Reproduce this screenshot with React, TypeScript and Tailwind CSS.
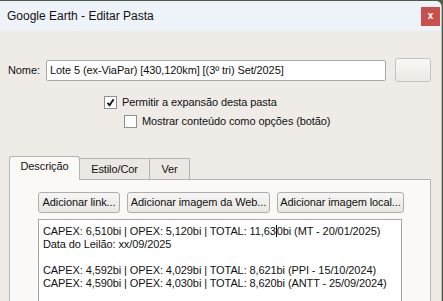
import React from 'react';

const font = { fontFamily: '"Liberation Sans", Arial, sans-serif' };

function Check({ checked }: { checked?: boolean }) {
  return (
    <span className="w-[13px] h-[13px] border border-[#8f8f8f] bg-white flex items-center justify-center shrink-0">
      {checked && (
        <svg width="9" height="9" viewBox="0 0 9 9">
          <path d="M1.5 4.8 L3.6 7.2 L7.6 1.2" fill="none" stroke="#111" strokeWidth="1.8" />
        </svg>
      )}
    </span>
  );
}

function Btn({ children, w }: { children: React.ReactNode; w: string }) {
  return (
    <div className={`${w} h-[21px] rounded-[3px] border border-[#adadad] bg-gradient-to-b from-[#f7f6f4] to-[#e9e7e3] flex items-center justify-center text-[11px] leading-none tracking-[-0.1px] text-[#111] whitespace-nowrap`}>
      {children}
    </div>
  );
}

export default function App() {
  return (
    <div className="w-[443px] h-[301px] bg-[#4d5a45] overflow-hidden pt-px" style={font}>
      <div className="w-[442px] h-[300px] rounded-tr-[6px] overflow-hidden border-r border-[#b9b9b9] bg-[#efece8] flex flex-col text-[11px] tracking-[-0.1px] text-[#111]">
        {/* Title bar */}
        <div className="h-[30px] bg-[#eef3f9] flex items-center justify-between pl-[7px] pr-[1px] shrink-0">
          <span className="text-[12px] tracking-normal leading-none">Google Earth - Editar Pasta</span>
          <div className="w-[19px] h-[19px] bg-[#c9504f] flex items-center justify-center text-white text-[10px] font-bold leading-none">x</div>
        </div>

        {/* Name row */}
        <div className="flex items-center h-[24px] mt-[27px] pl-[8px] shrink-0">
          <span className="w-[38px]">Nome:</span>
          <div className="w-[340px] h-[21px] bg-white border border-[#a9a9a9] rounded-[2px] flex items-center px-[3px] whitespace-nowrap">
            Lote 5 (ex-ViaPar) [430,120km] [(3º tri) Set/2025]
          </div>
          <div className="ml-[9px] w-[36px] h-[24px] rounded-[3px] border border-[#c3c3c3] bg-gradient-to-b from-[#faf8f5] to-[#ece9e4]" />
        </div>

        {/* Checkboxes */}
        <div className="flex items-center gap-[5px] h-[16px] mt-[12px] pl-[104px] shrink-0">
          <Check checked />
          <span>Permitir a expansão desta pasta</span>
        </div>
        <div className="flex items-center gap-[5px] h-[16px] mt-[3px] pl-[124px] shrink-0">
          <Check />
          <span>Mostrar conteúdo como opções (botão)</span>
        </div>

        {/* Tabs */}
        <div className="flex items-end mt-[27px] pl-[9px] h-[23px] relative z-10 shrink-0">
          <div className="h-[24px] w-[71px] border border-[#b3b3b3] border-b-0 rounded-t-[3px] bg-[#fbf9f6] flex items-center justify-center -mb-px pb-[4px]">
            Descrição
          </div>
          <div className="h-[21px] w-[70px] border border-l-0 border-b-0 border-[#b3b3b3] bg-[#ebe8e4] flex items-center justify-center">
            Estilo/Cor
          </div>
          <div className="h-[21px] w-[40px] border border-l-0 border-b-0 border-[#b3b3b3] bg-[#ebe8e4] rounded-tr-[2px] flex items-center justify-center">
            Ver
          </div>
        </div>

        {/* Panel */}
        <div className="ml-[9px] w-[422px] flex-1 border border-[#b3b3b3] border-b-0 bg-[#fbf9f6] flex flex-col pl-[28px] pt-[12px]">
          <div className="flex gap-[7px]">
            <Btn w="w-[82px]">Adicionar link...</Btn>
            <Btn w="w-[143px]">Adicionar imagem da Web...</Btn>
            <Btn w="w-[127px]">Adicionar imagem local...</Btn>
          </div>
          <div className="mt-[6px] w-[364px] flex-1 bg-white border border-[#a9a9a9] border-b-0 px-[4px] pt-[5px] leading-[13px] whitespace-nowrap">
            <div>
              CAPEX: 6,510bi | OPEX: 5,120bi | TOTAL: 11,63
              <span className="inline-block w-px h-[12px] bg-black align-[-2px]" />
              0bi (MT - 20/01/2025)
            </div>
            <div>Data do Leilão: xx/09/2025</div>
            <div className="h-[13px]" />
            <div>CAPEX: 4,592bi | OPEX: 4,029bi | TOTAL: 8,621bi (PPI - 15/10/2024)</div>
            <div>CAPEX: 4,590bi | OPEX: 4,030bi | TOTAL: 8,620bi (ANTT - 25/09/2024)</div>
          </div>
        </div>
      </div>
    </div>
  );
}
